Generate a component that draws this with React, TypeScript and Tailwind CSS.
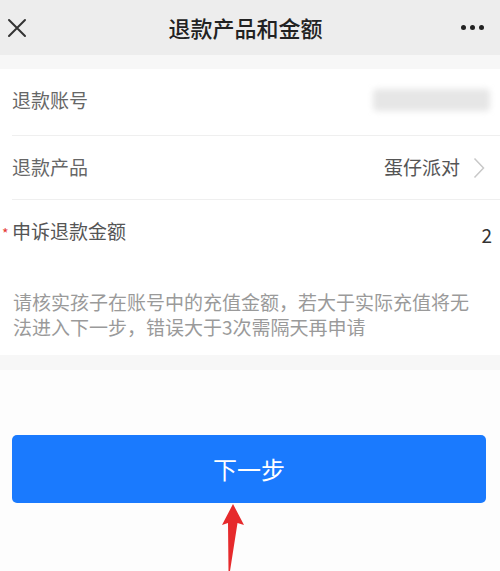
import React from "react";

const font = { fontFamily: '"Noto Sans CJK SC", "Noto Sans", sans-serif' };

function CloseIcon() {
  return (
    <svg width="20" height="20" viewBox="0 0 20 20" className="text-[#333]">
      <path d="M2 2 L18 18 M18 2 L2 18" stroke="currentColor" strokeWidth="2" strokeLinecap="round" />
    </svg>
  );
}

function MoreIcon() {
  return (
    <div className="flex items-center gap-[4px]">
      <span className="h-[5px] w-[5px] rounded-full bg-[#222]" />
      <span className="h-[5px] w-[5px] rounded-full bg-[#222]" />
      <span className="h-[5px] w-[5px] rounded-full bg-[#222]" />
    </div>
  );
}

function Chevron() {
  return (
    <svg width="12" height="22" viewBox="0 0 12 22">
      <path d="M1.5 1.5 L10.5 11 L1.5 20.5" fill="none" stroke="#c8c8c8" strokeWidth="1.5" />
    </svg>
  );
}

function Arrow() {
  return (
    <svg
      width="24"
      height="68"
      viewBox="0 0 24 68"
      className="pointer-events-none absolute left-[221px] top-[504px]"
    >
      <path d="M12 0 L23 21 L16.5 19 L9 67 L7.5 67 L7 19 L1 21 Z" fill="#e62a2c" />
    </svg>
  );
}

export default function App() {
  return (
    <div className="relative h-[571px] w-[500px] overflow-hidden bg-[#fdfdfd]" style={font}>
      <div className="flex h-[55px] items-center justify-between bg-[#ededed] px-[7px]">
        <CloseIcon />
        <h1 className="pl-[3px] text-[22px] font-medium text-[#222]">退款产品和金额</h1>
        <div className="pr-[9px]">
          <MoreIcon />
        </div>
      </div>
      <div className="h-[14px] bg-[#f7f7f7]" />

      <div className="bg-white">
        <div className="ml-[12px] flex h-[67px] items-center justify-between border-b border-[#efefef] pb-[4px] pr-[10px]">
          <span className="text-[19px] text-[#666]">退款账号</span>
          <div className="h-[22px] w-[117px] rounded-sm bg-[#e6e6e6] blur-[3px]" />
        </div>
        <div className="ml-[12px] flex h-[64px] items-center justify-between border-b border-[#efefef] pr-[15px]">
          <span className="text-[19px] text-[#666]">退款产品</span>
          <div className="flex items-center gap-[13px]">
            <span className="text-[19px] text-[#555]">蛋仔派对</span>
            <Chevron />
          </div>
        </div>
        <div className="h-[155px] pt-[17px]">
          <div className="flex items-start justify-between pr-[8px]">
            <div className="flex items-start">
              <span className="mt-[6px] w-[12px] pl-[2px] text-[14px] leading-[20px] text-[#e53935]">*</span>
              <span className="text-[19px] leading-[28px] text-[#555]">申诉退款金额</span>
            </div>
            <span className="mt-[4px] text-[19px] leading-[28px] text-[#333]">2</span>
          </div>
          <p className="mt-[40px] px-[13px] text-[19px] leading-[25px] text-[#9a9a9a]">
            请核实孩子在账号中的充值金额，若大于实际充值将无法进入下一步，错误大于3次需隔天再申请
          </p>
        </div>
      </div>
      <div className="h-[15px] bg-[#f7f7f7]" />

      <div className="px-[12px] pt-[65px]">
        <button className="flex h-[68px] w-[474px] items-center justify-center rounded-[5px] bg-[#1a7afe] text-[24px] text-white">
          下一步
        </button>
      </div>

      <Arrow />
    </div>
  );
}
